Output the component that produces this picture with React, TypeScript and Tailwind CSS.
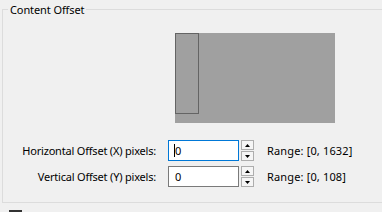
import React from 'react';

const font = { fontFamily: '"Noto Sans", "Open Sans", sans-serif' };

const Spinner: React.FC = () => (
  <div className="ml-[2px] flex w-[13px] flex-col gap-[1px]">
    <div className="flex h-[10px] items-center justify-center border border-[#adadad] bg-[#f5f5f5]">
      <svg width="5" height="3" viewBox="0 0 5 3">
        <path d="M0 3 L2.5 0 L5 3 Z" fill="#000" />
      </svg>
    </div>
    <div className="flex h-[10px] items-center justify-center border border-[#adadad] bg-[#f5f5f5]">
      <svg width="5" height="3" viewBox="0 0 5 3">
        <path d="M0 0 L2.5 3 L5 0 Z" fill="#000" />
      </svg>
    </div>
  </div>
);

const OffsetRow: React.FC<{ label: string; range: string; focused?: boolean }> = ({
  label,
  range,
  focused,
}) => (
  <div className="flex h-[21px] items-center">
    <div className="w-[153px] text-right tracking-[-0.2px]">{label}</div>
    <div
      className={`relative ml-[12px] flex h-[21px] w-[71px] items-center border bg-white pl-[6px] ${
        focused ? 'border-[#0078d7]' : 'border-[#7a7a7a]'
      }`}
    >
      <span>0</span>
      {focused && <span className="absolute left-[5px] top-[3px] h-[13px] w-[1px] bg-black" />}
    </div>
    <Spinner />
    <div className="ml-[13px] tracking-[0.15px]">{range}</div>
  </div>
);

export default function App() {
  return (
    <div
      className="h-[212px] w-[382px] overflow-hidden bg-[#f0f0f0] pl-[2px] pt-[9px] text-[11px] leading-none text-black"
      style={font}
    >
      <div className="relative h-[194px] w-[400px] border border-[#dcdcdc]">
        <span className="absolute left-[5px] top-[-6px] bg-[#f0f0f0] px-[2px] tracking-[-0.1px]">
          Content Offset
        </span>
        <div className="ml-[172px] mt-[23px] flex h-[90px] w-[160px] items-start bg-[#a0a0a0]">
          <div className="h-[81px] w-[24px] border border-[#646464]" />
        </div>
        <div className="mt-[17px] flex flex-col gap-[5px]">
          <OffsetRow label="Horizontal Offset (X) pixels:" range="Range: [0, 1632]" focused />
          <OffsetRow label="Vertical Offset (Y) pixels:" range="Range: [0, 108]" />
        </div>
      </div>
      <div className="ml-[7px] mt-[7px] h-[13px] w-[13px] border-2 border-[#333] bg-white" />
    </div>
  );
}
